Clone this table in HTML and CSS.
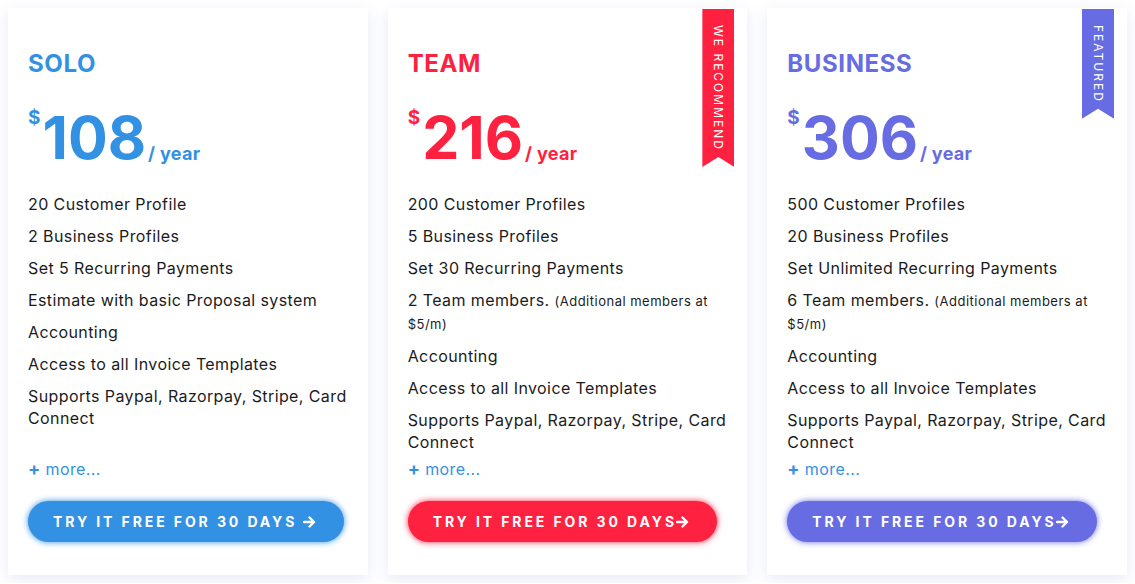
FILE: index.html
```html
<!DOCTYPE html>
<html>
<head>
<meta charset="utf-8">
<link rel="stylesheet" href="styles.css">
</head>
<body>
<div class="plans">
  <div class="card solo">
    <h2 class="name">SOLO</h2>
    <div class="price"><span class="cur">$</span><span class="amt">108</span><span class="per">/ year</span></div>
    <ul class="features">
      <li>20 Customer Profile</li>
      <li>2 Business Profiles</li>
      <li>Set 5 Recurring Payments</li>
      <li>Estimate with basic Proposal system</li>
      <li>Accounting</li>
      <li>Access to all Invoice Templates</li>
      <li>Supports Paypal, Razorpay, Stripe, Card Connect</li>
    </ul>
    <a class="more"><b>+</b> more...</a>
    <a class="btn">Try it free for 30 days<svg class="arr" viewBox="0 0 13 12" width="13" height="12"><path d="M1 6H11M6.5 1.5L11 6L6.5 10.5" fill="none" stroke="currentColor" stroke-width="2.4" stroke-linecap="round" stroke-linejoin="round"/></svg></a>
  </div>
  <div class="card team">
    <div class="ribbon"><span>WE RECOMMEND</span></div>
    <h2 class="name">TEAM</h2>
    <div class="price"><span class="cur">$</span><span class="amt">216</span><span class="per">/ year</span></div>
    <ul class="features">
      <li>200 Customer Profiles</li>
      <li>5 Business Profiles</li>
      <li>Set 30 Recurring Payments</li>
      <li>2 Team members. <small>(Additional members at $5/m)</small></li>
      <li>Accounting</li>
      <li>Access to all Invoice Templates</li>
      <li>Supports Paypal, Razorpay, Stripe, Card Connect</li>
    </ul>
    <a class="more"><b>+</b> more...</a>
    <a class="btn">Try it free for 30 days<svg class="arr" viewBox="0 0 13 12" width="13" height="12"><path d="M1 6H11M6.5 1.5L11 6L6.5 10.5" fill="none" stroke="currentColor" stroke-width="2.4" stroke-linecap="round" stroke-linejoin="round"/></svg></a>
  </div>
  <div class="card business">
    <div class="ribbon"><span>FEATURED</span></div>
    <h2 class="name">BUSINESS</h2>
    <div class="price"><span class="cur">$</span><span class="amt">306</span><span class="per">/ year</span></div>
    <ul class="features">
      <li>500 Customer Profiles</li>
      <li>20 Business Profiles</li>
      <li>Set Unlimited Recurring Payments</li>
      <li>6 Team members. <small>(Additional members at $5/m)</small></li>
      <li>Accounting</li>
      <li>Access to all Invoice Templates</li>
      <li>Supports Paypal, Razorpay, Stripe, Card Connect</li>
    </ul>
    <a class="more"><b>+</b> more...</a>
    <a class="btn">Try it free for 30 days<svg class="arr" viewBox="0 0 13 12" width="13" height="12"><path d="M1 6H11M6.5 1.5L11 6L6.5 10.5" fill="none" stroke="currentColor" stroke-width="2.4" stroke-linecap="round" stroke-linejoin="round"/></svg></a>
  </div>
</div>
</body>
</html>
```
FILE: styles.css
```css
* { box-sizing: border-box; }
body {
  margin: 0;
  background: #fff;
  font-family: Inter, "Open Sans", sans-serif;
  color: #1b1b1b;
}
.plans {
  display: flex;
  gap: 20px;
  padding: 8px;
}
.card {
  position: relative;
  width: 360px;
  height: 567px;
  background: #fff;
  box-shadow: 0 4px 14px rgba(70, 90, 190, 0.13);
  padding: 41px 12px 33px 20px;
  display: flex;
  flex-direction: column;
}
.solo { --c: #3391e3; }
.team { --c: #ff2240; }
.business { --c: #676ce3; }
.name {
  margin: 0;
  font-size: 24px;
  font-weight: 700;
  letter-spacing: 0.6px;
  color: var(--c);
  line-height: 29px;
}
.price {
  display: flex;
  align-items: flex-start;
  color: var(--c);
  margin-top: 29px;
  height: 62px;
  font-weight: 700;
}
.cur {
  font-size: 19px;
  line-height: 22px;
  margin-top: 0;
}
.amt {
  font-size: 59px;
  line-height: 62px;
  margin-left: 2px;
}
.per {
  font-size: 18px;
  align-self: flex-end;
  margin-left: 2px;
  margin-bottom: 5px;
  letter-spacing: 0.3px;
}
.features {
  list-style: none;
  margin: 24px 0 0;
  padding: 0;
  font-size: 16px;
  line-height: 22px;
  letter-spacing: 0.4px;
}
.features li { margin-bottom: 10px; }
.features li:last-child { margin-bottom: 0; }
.features small { font-size: 13px; letter-spacing: 0.5px; line-height: 22px; }
.more {
  margin-top: auto;
  padding-top: 5px;
  color: #3391e3;
  font-size: 16px;
  line-height: 22px;
  letter-spacing: 0.4px;
}
.more b { font-size: 18px; }
.btn {
  margin-top: 21px;
  height: 41px;
  align-self: flex-start;
  padding: 0 28px 0 25px;
  border-radius: 21px;
  background: var(--c);
  color: #fff;
  text-transform: uppercase;
  font-size: 14px;
  font-weight: 700;
  letter-spacing: 2.9px;
  display: flex;
  align-items: center;
  box-shadow: 0 0 6px var(--c);
}
.arr { margin-left: -1px; }
.solo .arr { margin-left: 6px; }
.ribbon {
  position: absolute;
  top: 1px;
  right: 13px;
  width: 32px;
  background: var(--c);
  padding: 16px 0 16px;
  clip-path: polygon(0 0, 100% 0, 100% 100%, 50% calc(100% - 10px), 0 100%);
  display: flex;
  justify-content: center;
}
.ribbon span {
  writing-mode: vertical-rl;
  color: #fff;
  font-size: 12px;
  letter-spacing: 2px;
}
```
